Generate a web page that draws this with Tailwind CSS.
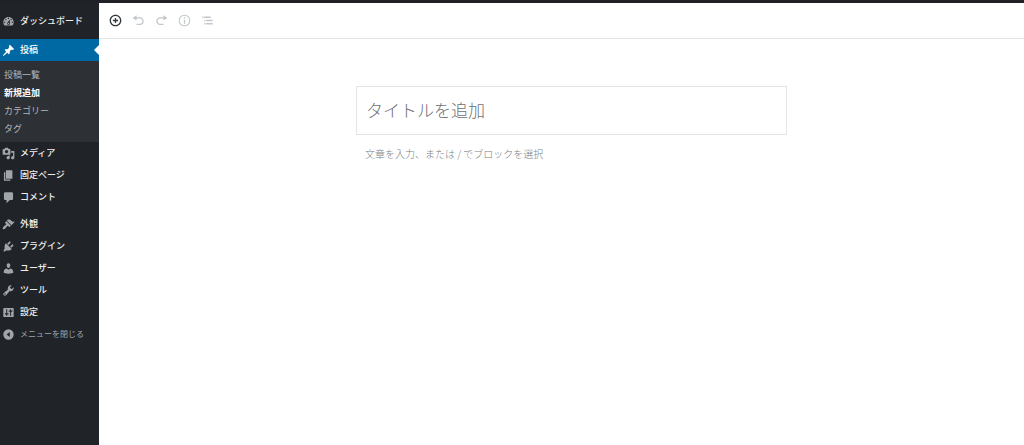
<!DOCTYPE html>
<html lang="ja">
<head>
  <meta charset="UTF-8">
  <meta name="viewport" content="width=device-width, initial-scale=1.0">
  <title>新規追加</title>
  <script src="https://cdn.jsdelivr.net/npm/@tailwindcss/browser@4"></script>
</head>
<body class="flex flex-col min-h-screen bg-white font-['Noto_Sans_CJK_JP',sans-serif]">
  <!-- Admin bar -->
  <div class="h-[3px] bg-[#1f2126]"></div>

  <div class="flex flex-1">
    <!-- Side menu -->
    <nav class="w-[99px] shrink-0 bg-[#202327] pt-[7px] text-[9px] leading-[22px] font-medium text-[#eeeeee]">
      <a href="#" class="flex items-center gap-[5px] pl-[2px] h-[22px] mb-[7px]">
        <svg class="size-[13px] fill-[#a0a5aa]" viewBox="0 0 20 20"><path d="M3.76 16h12.48c1.1-1.37 1.76-3.11 1.76-5 0-4.42-3.58-8-8-8s-8 3.58-8 8c0 1.89.66 3.63 1.76 5zM10 4c.55 0 1 .45 1 1s-.45 1-1 1-1-.45-1-1 .45-1 1-1zM6 6c.55 0 1 .45 1 1s-.45 1-1 1-1-.45-1-1 .45-1 1-1zm8 0c.55 0 1 .45 1 1s-.45 1-1 1-1-.45-1-1 .45-1 1-1zm-5.37 5.55L12 7v6c0 1.1-.9 2-2 2s-2-.9-2-2c0-.57.24-1.08.63-1.45zM4 10c.55 0 1 .45 1 1s-.45 1-1 1-1-.45-1-1 .45-1 1-1zm12 0c.55 0 1 .45 1 1s-.45 1-1 1-1-.45-1-1 .45-1 1-1zm-5 3c0-.55-.45-1-1-1s-1 .45-1 1 .45 1 1 1 1-.45 1-1z"/></svg>
        ダッシュボード
      </a>
      <a href="#" class="relative flex items-center gap-[5px] pl-[2px] h-[22px] bg-[#0069a3] text-white">
        <svg class="size-[13px] fill-white" viewBox="0 0 20 20"><path d="M10.44 3.02l1.82-1.82 6.36 6.35-1.83 1.82c-1.05-.68-2.48-.57-3.41.36l-.75.75c-.92.93-1.04 2.35-.35 3.41l-1.83 1.82-2.41-2.41-2.8 2.79c-.42.42-3.38 2.71-3.8 2.29s1.86-3.39 2.28-3.81l2.79-2.79L4.1 9.36l1.83-1.82c1.05.69 2.48.57 3.4-.36l.75-.75c.93-.92 1.05-2.35.36-3.41z"/></svg>
        投稿
        <svg class="absolute right-0 top-[6px] w-[5px] h-[10px] fill-white" viewBox="0 0 5 10"><path d="M5 0v10L0 5z"/></svg>
      </a>
      <ul class="bg-[#2d3035] pt-[5px] pb-[4px] pl-[4px] leading-[18px] font-normal text-[#b4b9be]">
        <li><a href="#" class="block">投稿一覧</a></li>
        <li><a href="#" class="block font-bold text-white">新規追加</a></li>
        <li><a href="#" class="block">カテゴリー</a></li>
        <li><a href="#" class="block">タグ</a></li>
      </ul>
      <a href="#" class="flex items-center gap-[5px] pl-[2px] h-[22px]">
        <svg class="size-[13px] fill-[#a0a5aa]" viewBox="0 0 20 20"><path d="M13 11V4c0-.55-.45-1-1-1h-1.67L9 1H5L3.67 3H2c-.55 0-1 .45-1 1v7c0 .55.45 1 1 1h10c.55 0 1-.45 1-1zM7 4.5c1.38 0 2.5 1.12 2.5 2.5S8.38 9.5 7 9.5 4.5 8.38 4.5 7 5.62 4.5 7 4.5zM14 6h5v10.5c0 1.38-1.12 2.5-2.5 2.5S14 17.88 14 16.5s1.12-2.5 2.5-2.5c.17 0 .34.02.5.05V9h-3V6zm-4 8.05V13h2v3.5c0 1.38-1.12 2.5-2.5 2.5S7 17.88 7 16.5 8.12 14 9.5 14c.17 0 .34.02.5.05z"/></svg>
        メディア
      </a>
      <a href="#" class="flex items-center gap-[5px] pl-[2px] h-[22px]">
        <svg class="size-[13px] fill-[#a0a5aa]" viewBox="0 0 20 20"><path d="M6 15V2h10v13H6zm-1 1h8v2H3V5h2v11z"/></svg>
        固定ページ
      </a>
      <a href="#" class="flex items-center gap-[5px] pl-[2px] h-[22px] mb-[5px]">
        <svg class="size-[13px] fill-[#a0a5aa]" viewBox="0 0 20 20"><path d="M5 2h10c1.100 0 2 .9 2 2v8c0 1.100-.9 2-2 2h-3l-5 5v-5H5c-1.100 0-2-.9-2-2V4c0-1.100.9-2 2-2z"/></svg>
        コメント
      </a>
      <a href="#" class="flex items-center gap-[5px] pl-[2px] h-[22px]">
        <svg class="size-[13px] fill-[#a0a5aa]" viewBox="0 0 20 20"><path d="M14.48 11.06L7.41 3.99l1.5-1.5c.5-.56 2.3-.47 3.51.32 1.21.8 1.43 1.28 2.91 2.1 1.18.64 2.45 1.26 4.45.85zm-.71.71L6.7 4.7 4.93 6.47c-.39.39-.39 1.02 0 1.41l1.06 1.06c.39.39.39 1.03 0 1.42-.6.6-1.43 1.11-2.21 1.69-.35.26-.7.53-1.01.84C1.43 14.23.4 16.08 1.4 17.07c.99 1 2.84-.03 4.18-1.36.31-.31.58-.66.85-1.02.57-.78 1.08-1.61 1.69-2.21.39-.39 1.02-.39 1.41 0l1.06 1.06c.39.39 1.02.39 1.41 0z"/></svg>
        外観
      </a>
      <a href="#" class="flex items-center gap-[5px] pl-[2px] h-[22px]">
        <svg class="size-[13px] fill-[#a0a5aa]" viewBox="0 0 20 20"><path d="M13.11 4.36L9.87 7.6 8 5.73l3.24-3.24c.35-.34 1.05-.2 1.56.32.52.51.66 1.21.31 1.55zm-8 1.77l.91-1.12 9.01 9.01-1.19.84c-.71.71-2.63 1.16-3.82 1.16H6.14L4.9 17.26c-.59.59-1.54.59-2.12 0-.59-.58-.59-1.53 0-2.12l1.24-1.24v-3.88c0-1.13.4-3.19 1.09-3.89zm7.26 3.97l3.24-3.24c.34-.35 1.04-.21 1.55.31.52.51.66 1.21.31 1.55l-3.24 3.25z"/></svg>
        プラグイン
      </a>
      <a href="#" class="flex items-center gap-[5px] pl-[2px] h-[22px]">
        <svg class="size-[13px] fill-[#a0a5aa]" viewBox="0 0 20 20"><path d="M10 9.25c-2.27 0-2.73-3.44-2.73-3.44C7 4.02 7.82 2 9.97 2c2.16 0 2.98 2.02 2.71 3.81 0 0-.41 3.44-2.68 3.44zm0 2.57L12.72 10c2.39 0 4.52 2.33 4.52 4.53v2.49s-3.65 1.13-7.24 1.13c-3.65 0-7.24-1.13-7.24-1.13v-2.49c0-2.25 1.94-4.48 4.47-4.48z"/></svg>
        ユーザー
      </a>
      <a href="#" class="flex items-center gap-[5px] pl-[2px] h-[22px]">
        <svg class="size-[13px] fill-[#a0a5aa]" viewBox="0 0 20 20"><path d="M16.68 9.77c-1.34 1.34-3.3 1.67-4.95.99l-5.41 6.52c-.99.99-2.59.99-3.58 0s-.99-2.59 0-3.57l6.52-5.42c-.68-1.65-.35-3.61.99-4.95 1.28-1.28 3.12-1.62 4.72-1.06l-2.89 2.89 2.82 2.82 2.86-2.87c.53 1.58.18 3.39-1.08 4.65zM3.81 16.21c.4.39 1.04.39 1.43 0 .4-.4.4-1.04 0-1.43-.39-.4-1.03-.4-1.43 0-.39.39-.39 1.03 0 1.43z"/></svg>
        ツール
      </a>
      <a href="#" class="flex items-center gap-[5px] pl-[2px] h-[22px]">
        <svg class="size-[13px] fill-[#a0a5aa]" viewBox="0 0 20 20"><path fill-rule="evenodd" d="M3 3h14a1 1 0 0 1 1 1v12a1 1 0 0 1-1 1H3a1 1 0 0 1-1-1V4a1 1 0 0 1 1-1zM6.500 5v6H4.500v2h2v2h1.500v-2h2v-2H8V5zM12.500 5v2h-2v2h2v6H14V9h2V7h-2V5z"/></svg>
        設定
      </a>
      <button type="button" class="flex items-center gap-[5px] pl-[2px] h-[22px] text-[8px] font-normal text-[#a0a5aa]">
        <svg class="size-[13px] fill-[#a0a5aa]" viewBox="0 0 20 20"><path fill-rule="evenodd" d="M10 2a8 8 0 1 0 0 16 8 8 0 0 0 0-16zM12 6v8l-5-4z"/></svg>
        メニューを閉じる
      </button>
    </nav>

    <!-- Editor -->
    <div class="flex-1">
      <div class="flex items-center gap-[10px] h-[36px] pl-[10px] border-b border-[#e2e4e7] text-[#c2c6ca]">
        <button type="button" aria-label="ブロックの追加" class="text-[#32373c]">
          <svg class="size-[13px] fill-current" viewBox="0 0 20 20"><path d="M10 1c-5 0-9 4-9 9s4 9 9 9 9-4 9-9-4-9-9-9zm0 16c-3.9 0-7-3.1-7-7s3.1-7 7-7 7 3.1 7 7-3.1 7-7 7zm1-11H9v3H6v2h3v3h2v-3h3V9h-3V6z"/></svg>
        </button>
        <button type="button" aria-label="元に戻す">
          <svg class="size-[13px] fill-current" viewBox="0 0 20 20"><path d="M12 5H7V2L1 6l6 4V7h5c2.2 0 4 1.8 4 4s-1.8 4-4 4H7v2h5c3.3 0 6-2.7 6-6s-2.7-6-6-6z"/></svg>
        </button>
        <button type="button" aria-label="やり直す">
          <svg class="size-[13px] fill-current" viewBox="0 0 20 20"><path d="M8 5h5V2l6 4-6 4V7H8c-2.200 0-4 1.800-4 4s1.800 4 4 4h5v2H8c-3.300 0-6-2.700-6-6s2.700-6 6-6z"/></svg>
        </button>
        <button type="button" aria-label="コンテンツ構造">
          <svg class="size-[13px] fill-current" viewBox="0 0 20 20"><path fill-rule="evenodd" d="M10 1a9 9 0 1 0 0 18 9 9 0 0 0 0-18zm0 1.600a7.400 7.400 0 1 1 0 14.800 7.400 7.400 0 0 1 0-14.800zM9 5v2h2V5zm0 4v6h2V9z"/></svg>
        </button>
        <button type="button" aria-label="ブロックナビゲーション">
          <svg class="size-[13px] fill-current" viewBox="0 0 20 20"><path d="M2 4h2v2H2zM5 4h10v2H5zM5 9h2v2H5zM8 9h10v2H8zM5 14h2v2H5zM8 14h10v2H8z"/></svg>
        </button>
      </div>

      <main class="pt-[47px] pl-[20px]">
        <div class="w-[431px] max-w-full mx-auto">
          <input type="text" aria-label="タイトルを追加" placeholder="タイトルを追加" class="block w-full h-[49px] px-[9px] pb-[2px] border border-[#e2e4e7] text-[17px] font-light placeholder:text-[#6c7176] outline-none">
          <input type="text" aria-label="本文" placeholder="文章を入力、または / でブロックを選択" class="block w-full h-[20px] mt-[8px] px-[9px] text-[10px] font-light placeholder:text-[#7b8085] outline-none">
        </div>
      </main>
    </div>
  </div>
</body>
</html>
